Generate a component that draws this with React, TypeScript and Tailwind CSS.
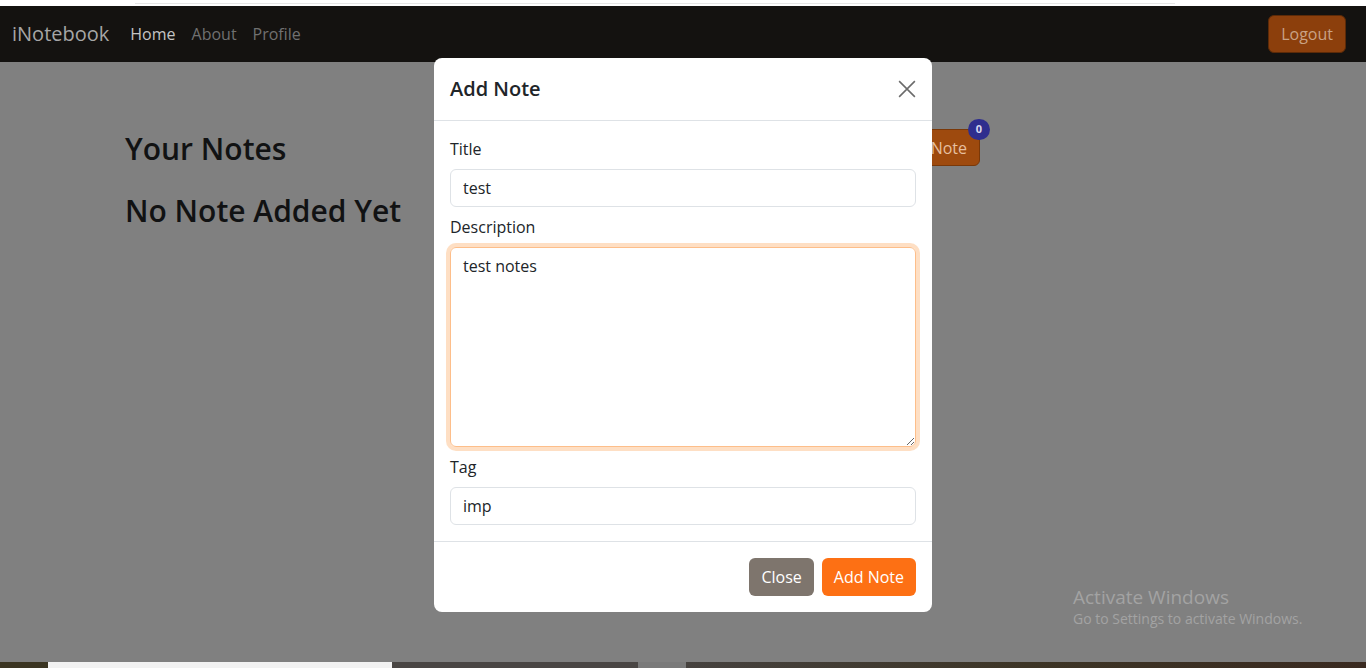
const font = { fontFamily: '"Open Sans", "Noto Sans", sans-serif' };

const Field = ({ label, value, last }: { label: string; value: string; last?: boolean }) => (
  <div className={last ? "" : "mb-2"}>
    <label className="block mb-2 leading-6 text-[16px] text-[#212529]">{label}</label>
    <input
      readOnly
      value={value}
      className="w-full h-[38px] px-3 border border-[#dee2e6] rounded-[6px] text-[16px] text-[#212529] bg-white outline-none"
    />
  </div>
);

const App = () => {
  return (
    <div className="w-[1366px] h-[668px] overflow-hidden flex flex-col bg-[#808080]" style={font}>
      {/* browser strip */}
      <div className="h-[6px] bg-white flex items-center px-[135px]">
        <div className="h-px w-[1040px] bg-[#e6e6e6]" />
      </div>

      <div className="relative flex-1">
        {/* dimmed page */}
        <nav className="h-[56px] bg-[#141210] flex items-center pl-3 pr-5">
          <span className="text-[20px] text-[#a6a6a6] mr-[21px]">iNotebook</span>
          <div className="flex items-center gap-4 text-[16px]">
            <span className="text-[#c4c4c4]">Home</span>
            <span className="text-[#707070]">About</span>
            <span className="text-[#707070]">Profile</span>
          </div>
          <button className="ml-auto h-[38px] px-3 rounded-[6px] bg-[#8c3f0c] border border-[#5c2a08] text-[16px] text-[#c9a285]">
            Logout
          </button>
        </nav>

        <div className="pl-[125px] pt-[68px]">
          <div className="w-[855px] flex items-center justify-between">
            <h2 className="text-[30px] font-semibold leading-[38px] text-[#111213]">Your Notes</h2>
            <div className="relative -mt-[3px]">
              <button className="h-[37px] px-3 rounded-[6px] bg-[#9e4a0e] border border-[#7a3808] text-[16px] text-[#e6bf9f]">
                Add Note
              </button>
              <span className="absolute -top-[10px] -right-[10px] w-[22px] h-[21px] rounded-full bg-[#2f2e8e] text-[#d8d8ee] text-[11px] font-bold flex items-center justify-center">
                0
              </span>
            </div>
          </div>
          <h2 className="mt-6 text-[30px] font-semibold leading-[38px] text-[#111213]">No Note Added Yet</h2>
        </div>

        <div className="absolute left-[1073px] top-[579px] text-[#a3a3a3]">
          <p className="text-[19px] leading-6">Activate Windows</p>
          <p className="text-[14px] leading-5">Go to Settings to activate Windows.</p>
        </div>

        {/* modal */}
        <div className="absolute inset-0 flex justify-center pt-[52px]">
          <div className="w-[498px] h-[554px] bg-white rounded-[8px] flex flex-col">
            <div className="h-[63px] px-4 flex items-center justify-between border-b border-[#dee2e6]">
              <h5 className="text-[20px] font-semibold text-[#212529]">Add Note</h5>
              <svg width="18" height="18" viewBox="0 0 16 16">
                <path d="M1 1L15 15M15 1L1 15" stroke="#6b6b6b" strokeWidth="1.4" />
              </svg>
            </div>
            <div className="p-4">
              <Field label="Title" value="test" />
              <div className="mb-2">
                <label className="block mb-2 leading-6 text-[16px] text-[#212529]">Description</label>
                <textarea
                  readOnly
                  value="test notes"
                  className="block w-full h-[200px] px-3 py-[6px] border border-[#fdbe8a] rounded-[6px] text-[16px] text-[#212529] outline-none shadow-[0_0_0_4px_rgba(253,126,20,0.25)]"
                />
              </div>
              <Field label="Tag" value="imp" last />
            </div>
            <div className="border-t border-[#dee2e6] px-3 py-4 flex justify-end gap-2">
              <button className="h-[38px] px-3 rounded-[6px] bg-[#7e756d] text-white text-[16px]">Close</button>
              <button className="h-[38px] px-3 mr-1 rounded-[6px] bg-[#fd7014] text-white text-[16px]">Add Note</button>
            </div>
          </div>
        </div>
      </div>

      {/* taskbar strip */}
      <div className="h-[6px] flex">
        <div className="w-[48px] bg-[#3b3522]" />
        <div className="w-[344px] bg-[#f2f2f2]" />
        <div className="w-[246px] bg-[#4a4644]" />
        <div className="w-[48px] bg-[#7a7a7a]" />
        <div className="flex-1 bg-gradient-to-r from-[#46423f] via-[#3d3526] to-[#3a2a20]" />
      </div>
    </div>
  );
};

export default App;
